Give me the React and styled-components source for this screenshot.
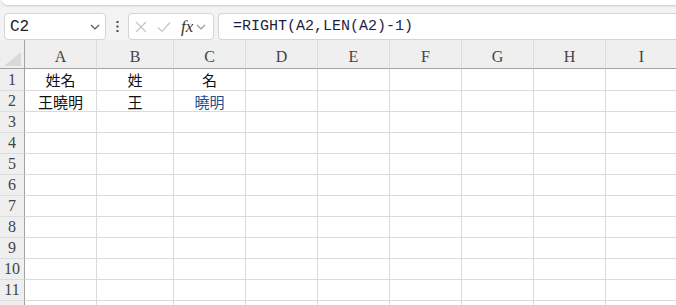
import React from "react";
import styled, { createGlobalStyle } from "styled-components";

const Global = createGlobalStyle`
  html, body { margin: 0; padding: 0; background: #f3f3f3; overflow: hidden; }
  body { width: 676px; height: 305px; }
`;

const Page = styled.div`
  width: 676px;
  height: 305px;
  overflow: hidden;
  background: #f3f3f3;
  font-family: "Liberation Sans", sans-serif;
`;

const TopBand = styled.div`
  height: 13px;
  padding: 0 0 0 2px;
  box-sizing: border-box;
`;

const Ribbon = styled.div`
  height: 5px;
  background: #fff;
  border-radius: 0 0 0 6px;
  box-shadow: 0 1px 2px rgba(0, 0, 0, 0.18);
`;

const FormulaRow = styled.div`
  display: flex;
  align-items: stretch;
  height: 27px;
  padding-left: 4px;
`;

const Box = styled.div`
  display: flex;
  align-items: center;
  box-sizing: border-box;
  background: #fff;
  border: 1px solid #d4d4d4;
  border-radius: 4px;
  width: ${(p) => p.$w || "auto"};
  flex: ${(p) => (p.$grow ? "1" : "none")};
  margin-right: ${(p) => p.$mr || "0"};
  padding: ${(p) => p.$pad || "0"};
  ${(p) => (p.$openRight ? "border-top-right-radius:0;border-bottom-right-radius:0;border-right:none;" : "")}
`;

const NameText = styled.span`
  flex: 1;
  font-family: "Liberation Mono", monospace;
  font-size: 16px;
  color: #222;
`;

const Dots = styled.div`
  width: 22px;
  display: flex;
  align-items: center;
  justify-content: center;
`;

const Fx = styled.span`
  font-family: "Liberation Serif", serif;
  font-style: italic;
  font-size: 17px;
  color: #333;
  margin-left: 10px;
  margin-right: 3px;
`;

const FormulaText = styled.span`
  font-family: "Liberation Mono", monospace;
  font-size: 15px;
  color: #1e1e44;
  white-space: pre;
`;

const Sheet = styled.div`
  display: grid;
  grid-template-columns: 25px 72px 77px repeat(7, 72px);
  grid-template-rows: 29px 22px repeat(11, 21px);
  background: #fff;
`;

const Cell = styled.div`
  box-sizing: border-box;
  display: flex;
  align-items: center;
  justify-content: center;
  border-right: 1px solid #dadada;
  border-bottom: 1px solid #dadada;
  font-family: "Noto Sans CJK TC", "Noto Sans CJK SC", sans-serif;
  font-size: 15px;
  color: ${(p) => p.$color || "#111"};
  overflow: hidden;
  white-space: nowrap;
`;

const ColHead = styled(Cell)`
  background: #efefef;
  border-bottom: 1px solid #a3a3a3;
  border-right: 1px solid #dcdcdc;
  font-family: "Liberation Serif", serif;
  font-size: 16px;
  color: #444;
  padding-top: 6px;
`;

const RowHead = styled(Cell)`
  background: #efefef;
  border-right: 1px solid #a3a3a3;
  border-bottom: 1px solid #dcdcdc;
  font-family: "Liberation Serif", serif;
  font-size: 16px;
  color: #444;
`;

const Corner = styled(ColHead)`
  border-right: 1px solid #a3a3a3;
  align-items: flex-end;
  justify-content: flex-end;
  padding: 0 3px 2px 0;
`;

const cols = ["A", "B", "C", "D", "E", "F", "G", "H", "I"];
const data = {
  1: { A: "姓名", B: "姓", C: "名" },
  2: { A: "王曉明", B: "王", C: "曉明" },
};

export default function App() {
  return (
    <Page>
      <Global />
      <TopBand>
        <Ribbon />
      </TopBand>
      <FormulaRow>
        <Box $w="102px" $pad="0 5px 0 5px">
          <NameText>C2</NameText>
          <svg width="10" height="6" viewBox="0 0 10 6">
            <path d="M1 1l4 4 4-4" fill="none" stroke="#555" strokeWidth="1.2" />
          </svg>
        </Box>
        <Dots>
          <svg width="3" height="11" viewBox="0 0 3 11">
            <rect x="0.5" y="0" width="2" height="2" fill="#444" />
            <rect x="0.5" y="4.5" width="2" height="2" fill="#444" />
            <rect x="0.5" y="9" width="2" height="2" fill="#444" />
          </svg>
        </Dots>
        <Box $w="86px" $mr="4px" $pad="0 0 0 6px">
          <svg width="12" height="12" viewBox="0 0 12 12">
            <path d="M1 1l10 10M11 1L1 11" stroke="#c4c4c4" strokeWidth="1.2" />
          </svg>
          <svg width="14" height="12" viewBox="0 0 14 12" style={{ marginLeft: 10 }}>
            <path d="M1 6.5l4 4L13 1.5" fill="none" stroke="#c4c4c4" strokeWidth="1.2" />
          </svg>
          <Fx>fx</Fx>
          <svg width="10" height="6" viewBox="0 0 10 6">
            <path d="M1 1l4 4 4-4" fill="none" stroke="#999" strokeWidth="1.2" />
          </svg>
        </Box>
        <Box $grow $openRight $pad="0 0 0 14px">
          <FormulaText>=RIGHT(A2,LEN(A2)-1)</FormulaText>
        </Box>
      </FormulaRow>
      <Sheet>
        <Corner>
          <svg width="17" height="14" viewBox="0 0 17 14">
            <polygon points="17,0 17,14 0,14" fill="#d9d9d9" />
          </svg>
        </Corner>
        {cols.map((c) => (
          <ColHead key={c}>{c}</ColHead>
        ))}
        {Array.from({ length: 12 }, (_, i) => i + 1).map((r) => (
          <React.Fragment key={r}>
            <RowHead>{r <= 11 ? r : ""}</RowHead>
            {cols.map((c) => (
              <Cell key={c} $color={r === 2 && c === "C" ? "#1f4f8f" : undefined}>
                {(data[r] && data[r][c]) || ""}
              </Cell>
            ))}
          </React.Fragment>
        ))}
      </Sheet>
    </Page>
  );
}
